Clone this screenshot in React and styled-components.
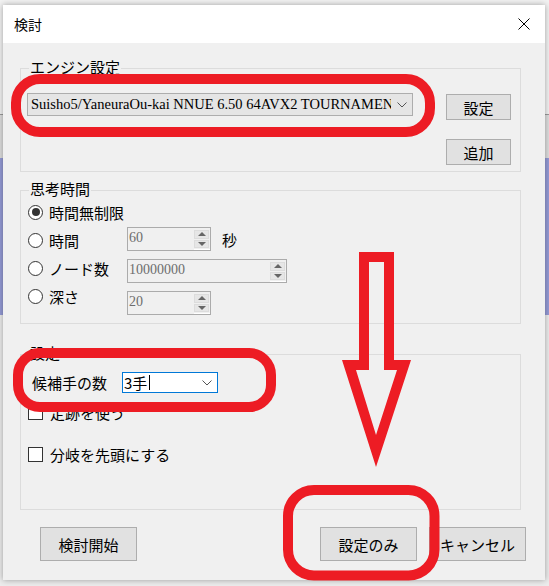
import React from "react";
import styled, { createGlobalStyle } from "styled-components";

const RED = "#ed1c24";
const UI_FONT = `"Noto Sans CJK JP", "Noto Sans", sans-serif`;
const VALUE_FONT = `"Liberation Serif", "Noto Sans CJK JP", serif`;

const GlobalStyle = createGlobalStyle`
    html, body {
        margin: 0;
        padding: 0;
    }
    body {
        font-family: ${UI_FONT};
        color: #000;
    }
`;

const Desktop = styled.div`
    position: relative;
    width: 549px;
    height: 586px;
    box-sizing: border-box;
    padding: 5px 4px 6px 3px;
    overflow: hidden;
    background: linear-gradient(
        to bottom,
        #f2f2f2 0 114px,
        #9a9a9a 114px 115px,
        #dedede 115px 158px,
        #959bd6 158px 315px,
        #ececec 315px 586px
    );
`;

const Window = styled.div`
    width: 542px;
    height: 575px;
    display: flex;
    flex-direction: column;
    background: #f0f0f0;
    box-shadow: 0 0 6px rgba(0, 0, 0, 0.35);
`;

const TitleBar = styled.div`
    height: 38px;
    flex-shrink: 0;
    display: flex;
    align-items: center;
    justify-content: space-between;
    padding: 0 15px 0 11px;
    background: #fff;
`;

const Title = styled.span`
    font-size: 14px;
    line-height: 1;
`;

const Body = styled.div`
    flex: 1;
    display: flex;
    flex-direction: column;
    padding: 25px 19px 19px 17px;
`;

const Group = styled.div`
    width: 501px;
    height: ${(p) => p.$h}px;
    box-sizing: border-box;
    border: 1px solid #dcdcdc;
    margin-bottom: ${(p) => p.$mb || 0}px;
    flex-shrink: 0;
`;

const Legend = styled.div`
    width: fit-content;
    height: 17px;
    margin: -11px 0 0 8px;
    padding: 0 1px;
    background: #f0f0f0;
    font-size: 15px;
    line-height: 17px;
`;

const EngineRow = styled.div`
    display: flex;
    justify-content: space-between;
    margin-top: 18px;
    padding: 0 9px 0 6px;
`;

const Combo = styled.div`
    width: 386px;
    height: 23px;
    box-sizing: border-box;
    border: 1px solid #adadad;
    background: #e5e5e5;
    display: flex;
    align-items: center;
    padding: 0 5px 0 3px;
`;

const ComboText = styled.span`
    width: 360px;
    overflow: hidden;
    white-space: nowrap;
    font-family: ${VALUE_FONT};
    font-size: 14.5px;
    color: #000;
`;

const Chevron = styled.svg`
    margin-left: auto;
    flex-shrink: 0;
`;

const ButtonColumn = styled.div`
    display: flex;
    flex-direction: column;
    gap: 19px;
    margin-top: 1px;
`;

const Button = styled.button`
    width: ${(p) => p.$w}px;
    height: ${(p) => p.$h}px;
    box-sizing: border-box;
    margin: 0;
    padding: 0;
    background: #e1e1e1;
    border: 1px solid #adadad;
    border-radius: 0;
    font-family: ${UI_FONT};
    font-size: 15px;
    color: #000;
`;

const TimeBody = styled.div`
    display: flex;
`;

const RadioList = styled.div`
    width: 98px;
    display: flex;
    flex-direction: column;
    gap: 8px;
    padding: 5px 0 0 7px;
`;

const RadioRow = styled.label`
    height: 20px;
    display: flex;
    align-items: center;
    gap: 6px;
    font-size: 15px;
    white-space: nowrap;
`;

const Radio = styled.span`
    width: 15px;
    height: 15px;
    box-sizing: border-box;
    border-radius: 50%;
    border: 1px solid #333;
    background: #fff;
    display: flex;
    align-items: center;
    justify-content: center;
    flex-shrink: 0;

    &::after {
        content: "";
        width: 8px;
        height: 8px;
        border-radius: 50%;
        background: ${(p) => (p.$checked ? "#333" : "transparent")};
    }
`;

const SpinList = styled.div`
    display: flex;
    flex-direction: column;
    gap: 8px;
    margin-top: 30px;
    margin-left: 1px;
`;

const SpinRow = styled.div`
    display: flex;
    align-items: center;
    gap: 11px;
`;

const SpinBox = styled.div`
    width: ${(p) => p.$w}px;
    height: 24px;
    box-sizing: border-box;
    border: 1px solid #ababab;
    background: #f0f0f0;
    display: flex;
`;

const SpinValue = styled.span`
    flex: 1;
    padding: 2px 0 0 1px;
    font-family: ${VALUE_FONT};
    font-size: 14px;
    line-height: 16px;
    color: #6d6d6d;
`;

const SpinButtons = styled.div`
    width: 15px;
    display: flex;
    flex-direction: column;
    gap: 1px;
    padding: 2px 1px 1px 0;
    border-bottom: 1px solid #fff;
`;

const SpinArrow = styled.div`
    flex: 1;
    background: #e6e6e6;
    border: 1px solid #dcdcdc;
    display: flex;
    align-items: center;
    justify-content: center;

    &::after {
        content: "";
        border-left: 4px solid transparent;
        border-right: 4px solid transparent;
        ${(p) => (p.$down ? "border-top" : "border-bottom")}: 4px solid #666;
    }
`;

const Unit = styled.span`
    font-size: 15px;
`;

const CandidateRow = styled.div`
    display: flex;
    align-items: center;
    gap: 15px;
    margin: 11px 0 0 11px;
    font-size: 15px;
`;

const Select = styled.div`
    width: 96px;
    height: 21px;
    box-sizing: border-box;
    border: 1px solid #0078d7;
    background: #fff;
    display: flex;
    align-items: center;
    padding: 0 5px 0 1px;
    font-size: 15px;
`;

const Caret = styled.span`
    width: 1px;
    height: 15px;
    margin-left: 2px;
    background: #000;
`;

const CheckList = styled.div`
    display: flex;
    flex-direction: column;
    gap: 27px;
    margin: 12px 0 0 7px;
`;

const CheckRow = styled.label`
    height: 15px;
    display: flex;
    align-items: center;
    gap: 7px;
    font-size: 15px;
    white-space: nowrap;
`;

const CheckBox = styled.span`
    width: 15px;
    height: 15px;
    box-sizing: border-box;
    border: 1px solid #333;
    background: #fff;
    flex-shrink: 0;
`;

const Footer = styled.div`
    display: flex;
    gap: 12px;
    padding-left: 20px;

    & > :first-child {
        margin-right: auto;
    }
`;

const Overlay = styled.svg`
    position: absolute;
    top: 0;
    left: 0;
    pointer-events: none;
`;

const ChevronIcon = () => (
    <Chevron width="10" height="6" viewBox="0 0 10 6">
        <path d="M0.5 0.5 L5 5 L9.5 0.5" fill="none" stroke="#555" strokeWidth="1" />
    </Chevron>
);

const Spin = ({ value, width }) => (
    <SpinBox $w={width}>
        <SpinValue>{value}</SpinValue>
        <SpinButtons>
            <SpinArrow />
            <SpinArrow $down />
        </SpinButtons>
    </SpinBox>
);

const Annotations = () => (
    <Overlay width="549" height="586" viewBox="0 0 549 586">
        <g fill="none" stroke={RED} strokeWidth="10">
            <rect x="16" y="79" width="414" height="53" rx="24" />
            <rect x="18" y="353" width="253" height="54" rx="22" />
            <rect x="288" y="490" width="146.5" height="85.5" rx="26" />
        </g>
        <path
            fill={RED}
            fillRule="evenodd"
            d="M359 252H394V360H411L376 467L342 360H359Z M369 262H384V370H397L376 435L356 370H369Z"
        />
    </Overlay>
);

const App = () => {
    return (
        <Desktop>
            <GlobalStyle />
            <Window>
                <TitleBar>
                    <Title>検討</Title>
                    <svg width="12" height="12" viewBox="0 0 12 12">
                        <path d="M0.5 0.5 L11.5 11.5 M11.5 0.5 L0.5 11.5" stroke="#000" strokeWidth="1" />
                    </svg>
                </TitleBar>
                <Body>
                    <Group $h={104} $mb={18}>
                        <Legend>エンジン設定</Legend>
                        <EngineRow>
                            <Combo>
                                <ComboText>Suisho5/YaneuraOu-kai NNUE 6.50 64AVX2 TOURNAMENT</ComboText>
                                <ChevronIcon />
                            </Combo>
                            <ButtonColumn>
                                <Button $w={65} $h={26}>設定</Button>
                                <Button $w={65} $h={26}>追加</Button>
                            </ButtonColumn>
                        </EngineRow>
                    </Group>

                    <Group $h={134} $mb={30}>
                        <Legend>思考時間</Legend>
                        <TimeBody>
                            <RadioList>
                                <RadioRow><Radio $checked />時間無制限</RadioRow>
                                <RadioRow><Radio />時間</RadioRow>
                                <RadioRow><Radio />ノード数</RadioRow>
                                <RadioRow><Radio />深さ</RadioRow>
                            </RadioList>
                            <SpinList>
                                <SpinRow>
                                    <Spin value="60" width={84} />
                                    <Unit>秒</Unit>
                                </SpinRow>
                                <SpinRow>
                                    <Spin value="10000000" width={160} />
                                </SpinRow>
                                <SpinRow>
                                    <Spin value="20" width={84} />
                                </SpinRow>
                            </SpinList>
                        </TimeBody>
                    </Group>

                    <Group $h={156} $mb={17}>
                        <Legend>設定</Legend>
                        <CandidateRow>
                            候補手の数
                            <Select>
                                3手
                                <Caret />
                                <ChevronIcon />
                            </Select>
                        </CandidateRow>
                        <CheckList>
                            <CheckRow><CheckBox />定跡を使う</CheckRow>
                            <CheckRow><CheckBox />分岐を先頭にする</CheckRow>
                        </CheckList>
                    </Group>

                    <Footer>
                        <Button $w={97} $h={34}>検討開始</Button>
                        <Button $w={97} $h={34}>設定のみ</Button>
                        <Button $w={97} $h={34}>キャンセル</Button>
                    </Footer>
                </Body>
            </Window>
            <Annotations />
        </Desktop>
    );
};

export default App;
